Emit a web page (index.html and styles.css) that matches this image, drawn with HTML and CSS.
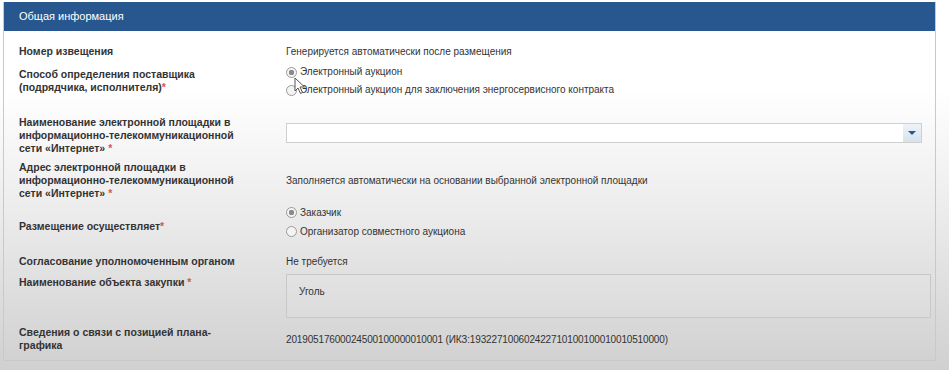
FILE: index.html
```html
<!DOCTYPE html>
<html>
<head>
    <title>Общая информация</title>
    <link rel="stylesheet" href="styles.css">
</head>
<body>

<div class="panel">
    <div class="panel-header">Общая информация</div>
    <div class="panel-body">

        <div class="row">
            <div class="label">Номер извещения</div>
            <div class="value">Генерируется автоматически после размещения</div>
        </div>

        <div class="row near">
            <div class="label">Способ определения поставщика<br>(подрядчика, исполнителя)<span class="req">*</span></div>
            <div class="value radios">
                <div class="radio checked">Электронный аукцион</div>
                <div class="radio">Электронный аукцион для заключения энергосервисного контракта</div>
            </div>
        </div>

        <div class="row spaced top">
            <div class="label">Наименование электронной площадки в<br>информационно-телекоммуникационной<br>сети «Интернет» <span class="req">*</span></div>
            <div class="value">
                <div class="select">
                    <div class="select-btn"><span class="arrow"></span></div>
                </div>
            </div>
        </div>

        <div class="row">
            <div class="label">Адрес электронной площадки в<br>информационно-телекоммуникационной<br>сети «Интернет» <span class="req">*</span></div>
            <div class="value">Заполняется автоматически на основании выбранной электронной площадки</div>
        </div>

        <div class="row tight">
            <div class="label shifted">Размещение осуществляет<span class="req">*</span></div>
            <div class="value radios loose">
                <div class="radio checked">Заказчик</div>
                <div class="radio">Организатор совместного аукциона</div>
            </div>
        </div>

        <div class="row spaced">
            <div class="label">Согласование уполномоченным органом</div>
            <div class="value">Не требуется</div>
        </div>

        <div class="row top">
            <div class="label">Наименование объекта закупки <span class="req">*</span></div>
            <div class="value">
                <div class="textbox">Уголь</div>
            </div>
        </div>

        <div class="row far">
            <div class="label">Сведения о связи с позицией плана-<br>графика</div>
            <div class="value digits">20190517600024500100000010001 (ИКЗ:193227100602422710100100010010510000)</div>
        </div>

    </div>
</div>

<svg class="cursor" width="12" height="18" viewBox="0 0 12 18">
    <path d="M1 1 L1 14 L4 11 L6.5 16.5 L8.5 15.5 L6 10 L10.5 10 Z" fill="#fff" stroke="#555" stroke-width="1"/>
</svg>

</body>
</html>
```

FILE: styles.css
```css
body {
    margin: 0;
    padding: 2px 0 0 3px;
    height: 370px;
    box-sizing: border-box;
    overflow: hidden;
    font-family: 'Liberation Sans', Arial, sans-serif;
    color: #333;
    background: linear-gradient(to bottom, #fff 0px, #fff 90px, #ececec 210px, #d0d0d0 370px);
    position: relative;
}

.panel {
    width: 933px;
    border: 1px solid #c9c9c9;
    border-top: none;
    box-sizing: border-box;
}

.panel-header {
    background: #285790;
    color: #fff;
    font-size: 11px;
    height: 29px;
    line-height: 29px;
    padding-left: 15px;
}

.panel-body {
    padding: 14px 0 8px 15px;
}

.row {
    display: grid;
    grid-template-columns: 267px 1fr;
    align-items: center;
    margin-top: 6px;
}

.row:first-child {
    margin-top: 0;
}

.row.near {
    margin-top: 5px;
}

.row.spaced {
    margin-top: 14px;
}

.row.spaced.top {
    margin-top: 17px;
}

.row.tight {
    margin-top: 3px;
}

.row.far {
    margin-top: 8px;
}

.row.top {
    align-items: start;
}

.row.top .label {
    padding-top: 2px;
}

.row.spaced.top .label {
    padding-top: 0;
}

.row.spaced.top .select {
    margin-top: 7px;
}

.label {
    font-size: 10.5px;
    font-weight: bold;
    line-height: 13px;
    color: #333;
}

.label.shifted {
    padding-top: 9px;
}

.req {
    color: #d9534f;
}

.value {
    font-size: 10px;
    line-height: 13px;
}

.value.digits {
    letter-spacing: -0.15px;
}

.radios .radio {
    height: 18px;
    line-height: 18px;
    display: flex;
    align-items: center;
}

.radios.loose .radio {
    height: 19px;
}

.radio::before {
    content: "";
    width: 9px;
    height: 9px;
    border: 1px solid #9a9a9a;
    border-radius: 50%;
    background: #f4f4f4;
    margin-right: 3px;
    box-sizing: content-box;
    flex-shrink: 0;
}

.radio.checked::before {
    background: radial-gradient(circle, #8a8a8a 0, #8a8a8a 2.5px, #f4f4f4 3px);
}

.select {
    width: 636px;
    height: 20px;
    border: 1px solid #cfcfcf;
    background: #fff;
    box-sizing: border-box;
    display: flex;
    justify-content: flex-end;
}

.select-btn {
    width: 18px;
    height: 18px;
    background: linear-gradient(to bottom, #eef3f7, #d6e3ee);
    display: flex;
    align-items: center;
    justify-content: center;
}

.arrow {
    width: 0;
    height: 0;
    border-left: 4px solid transparent;
    border-right: 4px solid transparent;
    border-top: 4px solid #1f5a94;
}

.textbox {
    width: 645px;
    height: 44px;
    border: 1px solid #c8c8c8;
    box-sizing: border-box;
    padding: 10px 12px;
    background: rgba(255, 255, 255, 0.08);
}

.cursor {
    position: absolute;
    left: 294px;
    top: 77px;
}
```
